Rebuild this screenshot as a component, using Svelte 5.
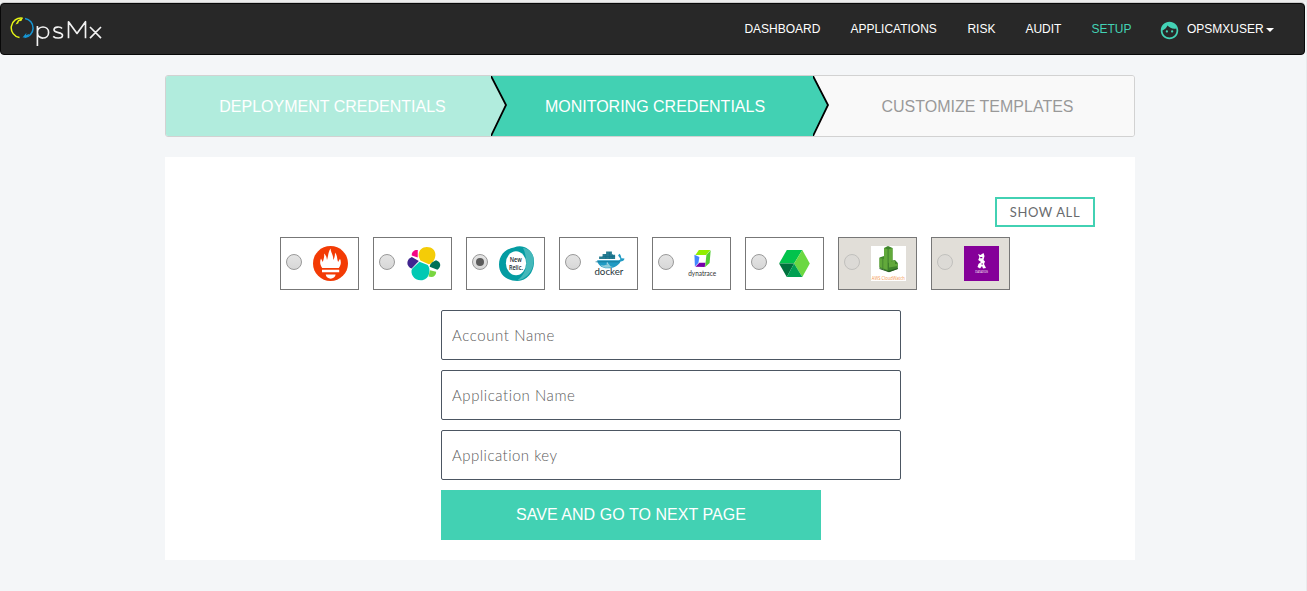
<script>
  const links = [
    { label: 'DASHBOARD', w: 76 },
    { label: 'APPLICATIONS', w: 87 },
    { label: 'RISK', w: 28 },
    { label: 'AUDIT', w: 36 },
    { label: 'SETUP', w: 40, active: true }
  ];
  const providers = ['prometheus', 'elastic', 'newrelic', 'docker', 'dynatrace', 'appdynamics', 'cloudwatch', 'datadog'];
  const fields = [
    { label: 'Account Name', spacing: 0.6 },
    { label: 'Application Name', spacing: 0.55 },
    { label: 'Application key', spacing: 0.48 }
  ];
  let selected = $state('newrelic');
</script>

<header>
  <svg class="logo" width="96" height="34" viewBox="0 0 96 34" aria-label="OpsMx">
    <path d="M9.5 22.5A9.7 9.7 0 0 1 12.5 3.2" fill="none" stroke="#e6f516" stroke-width="1.5" />
    <path d="M13 2.5 8 5.2 5.5 9.5 8.2 8.5 9 6.3 11.4 5.9Z" fill="#e6f516" />
    <path d="M15 3.4A9.7 9.7 0 0 1 14.5 22.6" fill="none" stroke="#1695d3" stroke-width="1.5" />
    <path d="M12.5 22.5 16.5 17.8 16 20.3 19.3 18.8 17.5 22Z" fill="#1695d3" />
    <g fill="none" stroke="#f2f2f2" stroke-width="1.65" stroke-linejoin="round">
      <path d="M27.4 11V31M27.4 17.5C27.4 10.2 38.6 10.2 38.6 17.5S27.4 25 27.4 17.5" />
      <path d="M52 13.5C50.5 11.4 44 11.4 44 14.8C44 18.4 52.5 16.8 52.5 20.2C52.5 24 45.5 23.6 43.2 21.3" />
      <path d="M58.5 23.2V6.7L67 18.5 75.5 6.7V23.2M80 12 91 23.2M91 12 80 23.2" />
    </g>
  </svg>
  <nav>
    {#each links as link}
      <a href="#top" class:active={link.active} style="width:{link.w}px">{link.label}</a>
    {/each}
    <a href="#top" class="user">
      <svg width="20" height="20" viewBox="0 0 24 24" fill="#43d2b5">
        <path d="M10.25 13c0 .69-.56 1.25-1.25 1.25S7.75 13.69 7.75 13s.56-1.25 1.25-1.25 1.25.56 1.25 1.25zM15 11.75c-.69 0-1.25.56-1.25 1.25s.56 1.25 1.25 1.25 1.25-.56 1.25-1.25-.56-1.25-1.25-1.25zM22 12c0 5.52-4.48 10-10 10S2 17.52 2 12 6.48 2 12 2s10 4.48 10 10zm-2 0c0-.78-.12-1.53-.33-2.24-.7.15-1.42.24-2.17.24-3.13 0-5.92-1.44-7.76-3.69C8.69 8.87 6.6 10.88 4 11.86c.01.04 0 .09 0 .14 0 4.41 3.59 8 8 8s8-3.59 8-8z" />
      </svg>
      <span>OPSMXUSER</span><i class="caret"></i>
    </a>
  </nav>
</header>

<main>
  <div class="steps">
    <div class="step done"><span>DEPLOYMENT CREDENTIALS</span></div>
    <div class="step current">
      <svg class="arrow" width="17" height="60" viewBox="0 0 17 60"><path d="M0 0 15.3 29 0 60Z" fill="#b1ecdd" /><path d="M0 0 15 29 0 60" fill="none" stroke="#000" stroke-width="1.8" /></svg>
      <span>MONITORING CREDENTIALS</span>
    </div>
    <div class="step next">
      <svg class="arrow" width="17" height="60" viewBox="0 0 17 60"><path d="M0 0 15.3 29 0 60Z" fill="#42d1b3" /><path d="M0 0 15 29 0 60" fill="none" stroke="#000" stroke-width="1.8" /></svg>
      <span>CUSTOMIZE TEMPLATES</span>
    </div>
  </div>

  <section>
    <button class="show">SHOW ALL</button>
    <div class="providers">
      {#each providers as id, i}
        <label class="provider" class:disabled={i > 5}>
          <input type="radio" name="provider" value={id} aria-label={id} bind:group={selected} disabled={i > 5} />
          <svg width="35" height="35" viewBox="0 0 35 35">
            {#if id === 'prometheus'}
              <circle cx="17.5" cy="17.5" r="17.5" fill="#f33b05" />
              <path d="M9.2 22C6.8 18.6 6.7 15.5 8 12.5L9.8 16C11 12 11.5 10 11 7.5C13.4 9.5 13.6 11.5 14 14C15.4 10 15 6 17.6 2.5C17.6 6.5 20.4 8.5 20.3 14C21.5 12 22 9.8 22 6.5C24.6 9.4 23.8 13 25.1 16L27 12.8C28.4 16 28 19 25.8 22Z" fill="#fff" />
              <path d="M9 23.7H26.2V26.3H9ZM12.7 28.5H22.6C22.2 34 13.2 34 12.7 28.5Z" fill="#fff" />
            {:else if id === 'elastic'}
              <g transform="translate(.8 0)">
                <path d="M12 10.7C11 5 15 1 20 1C26 1 29.2 5 28.5 10C28 14 25.3 17.8 22 18.2L13.6 14.6Z" fill="#f4cc07" />
                <path d="M12.7 15.8 20.9 18.9C24.6 23.5 22.5 34.2 14 34.2C7 34.2 3 27.5 5.3 22.7Z" fill="#00c9b3" />
                <path d="M5 11.1 12 14.9 4.9 22.5C-.4 20.8-1.4 13.8 5 11.1Z" fill="#40258f" />
                <path d="M11 4 10.9 11.6 5 9.5C4.5 6.3 7.2 3.6 11 4Z" fill="#f40486" />
                <path d="M29.3 14.2C34.8 16 34.4 21.4 30.6 23.8L22.9 20.7C23 17.6 26 15.5 29.3 14.2Z" fill="#007257" />
                <path d="M23.2 24.2 29.4 25.8C29.3 30 26.3 32 21.7 30.6Z" fill="#79d640" />
              </g>
            {:else if id === 'newrelic'}
              <path d="M15 1.5C25-2.5 34.5 4.5 35 15C35.5 25.5 28.5 35 18.5 35C7.5 35 0 28.5 0 18.5C0 9.5 6 3 15 1.5Z" fill="#049ca2" />
              <path d="M24 1.8C32.5 3.5 36 10 34.4 18C32.8 27 26.5 33.3 18 34.5C27 28 28.5 19 26.5 10C26 6.5 24.8 4 24 1.8Z" fill="#45b8ba" />
              <ellipse cx="17" cy="17.3" rx="10.1" ry="12" fill="#fff" />
              <g fill="#17272a" font-family="Open Sans, sans-serif" font-size="7.9" font-weight="600"><text x="10.7" y="16" textLength="12" lengthAdjust="spacingAndGlyphs">New</text><text x="9.9" y="24" textLength="14" lengthAdjust="spacingAndGlyphs">Relic.</text></g>
            {:else if id === 'docker'}
              <g transform="translate(1.6 0)">
                <path d="M3.6 14.2H25C27 14 27 12.8 26.3 12L24.5 9.5 25.7 7.8C27.5 9 27.5 11 27.8 12.2L30.9 12.5C30.5 14.7 29 15.5 27 15.5C23 23.5 10 24 6.3 19.5C4.6 18 3.6 16 3.6 14.2Z" fill="#219bc4" />
                <path d="M5.5 10.5H9V8H12.5V5.4H18.3V8.8H21.5V13H5.5Z" fill="#277c91" />
                <path d="M2 15.8H26M9 10.5H21.5M12.3 8V13M15.8 6V13M18.7 8V13" stroke="#126e8b" stroke-width=".7" />
                <path d="M7 19C10 20 13 19 15 17.5C16 20 18 21.2 20 21C14 22.5 9 22 7 19Z" fill="#91ccda" />
                <circle cx="13.7" cy="17.1" r=".7" fill="#fff" />
                <text x=".8" y="29" font-family="Lato, sans-serif" font-size="9.3" fill="#26343a" textLength="29" lengthAdjust="spacingAndGlyphs">docker</text>
              </g>
            {:else if id === 'dynatrace'}
              <g transform="translate(2.4 0)">
                <path d="M11.5 4H23L18.8 9H8Z" fill="#91ee00" />
                <path d="M23.3 4.2 22.2 17 17.7 21 19 9.1Z" fill="#52ce32" />
                <path d="M7 8.8 12 11 11 17 7.5 20.5Z" fill="#4385ff" />
                <path d="M8 20.7 12 16.7H18L17.3 21Z" fill="#7700a8" />
                <text x=".8" y="30.3" font-family="Lato, sans-serif" font-size="7.7" fill="#333" textLength="28" lengthAdjust="spacingAndGlyphs">dynatrace</text>
              </g>
            {:else if id === 'appdynamics'}
              <g transform="translate(.8 0)">
                <path d="M8 4H23.5L15.3 17.5H.3Z" fill="#02c34c" />
                <path d="M23.5 4 31 17.5 23.5 31 15.3 17.5Z" fill="#6bd841" />
                <path d="M.3 17.5H15.3L8 31Z" fill="#00713d" />
                <path d="M15.3 17.5 23.5 31H8Z" fill="#00a052" />
              </g>
            {:else if id === 'cloudwatch'}
              <path d="M0 0H35V35H0Z" fill="#fff" />
              <path d="M13 2 17 0 21.5 2V14.5L24 14 26.8 17V23L18 26 8.5 22V11.5L13 10Z" fill="#3f852b" />
              <path d="M13 2 17 3.4V24.3L8.5 21V12L13 13ZM17.3 3.4 21.5 2V14.5L17.3 17ZM18 16 24 14.5V18L26.8 17.8V20L18 21.5Z" fill="#62a93b" />
              <path d="M17 3.4V25M11.8 12.7V22" stroke="#39772b" stroke-width=".7" />
              <path d="M8.5 22 17 25 26.8 22V23L18 26.3 8.5 23Z" fill="#285d24" />
              <text x=".8" y="33.5" font-family="Open Sans, sans-serif" font-size="5.3" fill="#f4934c" textLength="33" lengthAdjust="spacingAndGlyphs">AWS CloudWatch</text>
            {:else}
              <path d="M0 0H35V35H0Z" fill="#850099" />
              <path d="M14 8 16.5 9 19.5 7 20.5 10 19.5 14 21 15.5 20 18 22 22 19 22.5 18 20 16 22.5 13.5 21 14.5 18 17 16 14.2 14 15.5 11Z" fill="#fff" />
              <path d="M16.2 11H18.3V12.2H16.2ZM17.4 17.5H19V18.6H17.4Z" fill="#850099" />
              <text x="11.2" y="26.5" font-family="Open Sans, sans-serif" font-size="3.9" fill="#fff" textLength="12.8" lengthAdjust="spacingAndGlyphs">DATADOG</text>
            {/if}
          </svg>
        </label>
      {/each}
    </div>
    <form>
      {#each fields as field}
        <input type="text" placeholder={field.label} style="letter-spacing:{field.spacing}px" />
      {/each}
      <button type="button" class="save">SAVE AND GO TO NEXT PAGE</button>
    </form>
  </section>
</main>

<style>
  :global(body) { margin: 0; background: #f4f6f8; overflow: hidden; font-family: "Liberation Sans", Arial, sans-serif; }
  :global(#app) { border-top: 2px solid #ededed; height: 591px; box-sizing: border-box; border-right: 1px solid #e9ebed; }
  * { box-sizing: border-box; }
  header { margin-top: 1px; width: 1305px; height: 52px; display: flex; justify-content: space-between; background: #282828; border: 1px solid #080808; border-radius: 4px; box-shadow: 0 -1px #ccc; }
  .logo { margin: 11px 0 0 9px; }
  nav { display: flex; gap: 30px; padding: 18px 29.6px 0 0; }
  nav a { color: #fff; text-decoration: none; font-size: 12px; line-height: 14px; white-space: nowrap; }
  nav a.active { color: #43d2b5; }
  .user { display: flex; align-items: flex-start; width: 113px; }
  .user svg { width: 21px; height: 21px; margin: -2px 6px 0 -2px; flex: none; }
  .user span { margin-left: .6px; }
  .caret { margin: 6px 0 0 2px; border: 4px solid transparent; border-top-color: #fff; border-bottom: 0; }
  main { width: 970px; margin: 20px 0 0 165px; }
  .steps { display: flex; height: 62px; border: 1px solid #d2d2d2; border-radius: 3px; overflow: hidden; }
  .step { position: relative; display: flex; align-items: center; justify-content: center; font-size: 16px; color: #fff; padding-top: 1px; }
  .done { width: 325px; background: #b1ecdd; padding-left: 8px; }
  .current { width: 322px; background: #42d1b3; padding-left: 6px; }
  .next { width: 321px; background: #f9f9f9; color: #999; padding-left: 8px; }
  .arrow { position: absolute; left: 0; top: 0; }
  section { margin-top: 20px; height: 403px; background: #fff; padding: 40px 40px 0; }
  button { font-family: inherit; border: 0; padding: 0; }
  .show { display: block; width: 100px; height: 30px; margin-left: auto; background: #fff; border: 2px solid #42d1b3; color: #696b6e; font: 13px Lato, sans-serif; letter-spacing: .6px; }
  .providers { display: flex; gap: 14px; margin: 10px 0 0 75px; }
  .provider { width: 79px; height: 53px; border: 1px solid #777; display: flex; align-items: center; padding-left: 5px; }
  .provider.disabled { background: #e1ded8; }
  .provider svg { margin-left: 11px; flex: none; }
  input[type=radio] { appearance: none; width: 16px; height: 16px; margin: -3px 0 0; border: 1px solid #999; border-radius: 50%; background: linear-gradient(#e4e4e4, #d7d7d7); display: grid; place-items: center; flex: none; }
  input[type=radio]:checked::before { content: ''; width: 8px; height: 8px; border-radius: 50%; background: #5b5b5b; }
  input[type=radio]:disabled { border-color: #c1c0bd; background: #dcdad6; }
  form { display: flex; flex-direction: column; gap: 10px; width: 460px; margin: 20px 0 0 236px; }
  input[type=text] { width: 460px; height: 50px; border: 1px solid #4c5662; border-radius: 2px; padding: 0 10px 1px; background: #fff; font: 300 15px Lato, sans-serif; outline: 0; }
  input::placeholder { color: #5c5c5c; opacity: 1; }
  .save { width: 380px; height: 50px; background: #42d1b3; color: #fff; font-size: 16px; letter-spacing: .05px; padding-bottom: 1px; }
</style>
